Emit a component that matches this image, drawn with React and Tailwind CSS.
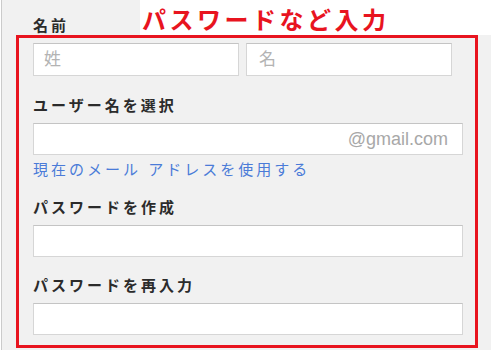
import React from 'react';

const jp = "font-['Liberation_Sans','Noto_Sans_CJK_JP',sans-serif]";

function Field({ suffix }) {
  return (
    <div className="flex h-[32px] items-center border border-[#d6d6d6] border-t-[#c4c4c4] bg-white pr-[14px]">
      <input className="h-full min-w-0 flex-1 bg-transparent px-[10px] outline-none" />
      {suffix && (
        <span className="font-['Liberation_Sans',sans-serif] text-[18px] text-[#a8a8a8]">{suffix}</span>
      )}
    </div>
  );
}

function Label({ children, className = '' }) {
  return (
    <div className={`text-[15px] font-bold leading-[20px] tracking-[3px] text-[#2b2b2b] ${className}`}>
      {children}
    </div>
  );
}

export default function App() {
  return (
    <div className={`relative flex h-[350px] w-[500px] overflow-hidden bg-white ${jp}`}>
      <div className="w-[1px] bg-white" />
      <div className="w-[1px] bg-[#cbcbcb]" />

      {/* form panel */}
      <div className="w-[489px] bg-[#f1f1f1]">
        <Label className="ml-[31px] mt-[16px] !leading-[19px]">名前</Label>

        {/* red annotation frame */}
        <div className="ml-[14px] w-[462px] border-[3px] border-[#e8141f] pb-[10px] pl-[14px] pr-[12px] pt-[5px]">
          <div className="flex gap-[7px]">
            <input
              placeholder="姓"
              className="h-[33px] w-[206px] border border-[#d6d6d6] border-t-[#c4c4c4] bg-white px-[10px] text-[17px] outline-none placeholder:text-[#b3b3b3]"
            />
            <input
              placeholder="名"
              className="h-[33px] w-[206px] border border-[#d6d6d6] border-t-[#c4c4c4] bg-white px-[12px] text-[17px] outline-none placeholder:text-[#b3b3b3]"
            />
          </div>

          <Label className="mt-[20px]">ユーザー名を選択</Label>
          <div className="mt-[7px]">
            <Field suffix="@gmail.com" />
          </div>
          <div className="mt-[5px] text-[15px] leading-[20px] tracking-[3px] text-[#4a7bd8]">
            現在のメール アドレスを使用する
          </div>

          <Label className="mt-[18px]">パスワードを作成</Label>
          <div className="mt-[7px]">
            <Field />
          </div>

          <Label className="mt-[19px]">パスワードを再入力</Label>
          <div className="mt-[7px]">
            <Field />
          </div>
        </div>
      </div>

      <div className="flex-1 bg-white" />

      {/* annotation title */}
      <div className="absolute left-[140px] top-0 h-[35px] w-[360px] bg-white pl-[2px] pt-[9px] text-[24px] font-bold leading-[24px] tracking-[3.5px] text-[#e8141f]">
        パスワードなど入力
      </div>
    </div>
  );
}
